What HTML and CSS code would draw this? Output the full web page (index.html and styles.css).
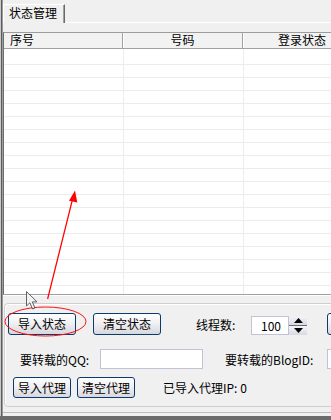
FILE: index.html
```html
<!DOCTYPE html>
<html lang="zh-CN">
<head>
    <meta charset="UTF-8">
    <meta name="viewport" content="width=device-width, initial-scale=1.0">
    <title>状态管理</title>
    <link rel="stylesheet" href="styles.css">
</head>
<body>
    <div class="window">
        <div class="tabstrip">
            <div class="tab">状态管理</div>
        </div>
        <div class="page">
            <div class="list">
                <div class="list-head">
                    <div class="col col-id">序号</div>
                    <div class="col col-num">号码</div>
                    <div class="col col-state">登录状态</div>
                </div>
                <div class="list-body">
                    <div class="cell"></div>
                    <div class="cell"></div>
                    <div class="cell"></div>
                </div>
            </div>

            <div class="group">
                <div class="row row-top">
                    <button class="btn btn-state">导入状态</button>
                    <button class="btn btn-state btn-clear">清空状态</button>
                    <span class="label label-threads">线程数:</span>
                    <div class="spin">
                        <input class="spin-input" type="text" value="100">
                        <div class="spin-btns">
                            <span class="spin-up">
                                <svg width="9" height="5" viewBox="0 0 9 5"><path d="M4.5 0 L9 5 L0 5 Z" fill="#000"/></svg>
                            </span>
                            <span class="spin-down">
                                <svg width="9" height="5" viewBox="0 0 9 5"><path d="M0 0 L9 0 L4.5 5 Z" fill="#000"/></svg>
                            </span>
                        </div>
                    </div>
                    <button class="btn btn-cut"></button>
                </div>

                <div class="row row-fields">
                    <span class="label label-qq">要转载的QQ:</span>
                    <input class="field field-qq" type="text">
                    <span class="label label-blog">要转载的BlogID:</span>
                    <input class="field field-blog" type="text">
                </div>

                <div class="row row-proxy">
                    <button class="btn btn-proxy">导入代理</button>
                    <button class="btn btn-proxy btn-clear-proxy">清空代理</button>
                    <span class="label label-count">已导入代理IP: 0</span>
                </div>
            </div>
        </div>

        <!-- annotations drawn over the screenshot -->
        <svg class="marks" width="331" height="420" viewBox="0 0 331 420">
            <ellipse cx="45.5" cy="321.5" rx="40.5" ry="14.5" fill="none" stroke="#ff1010" stroke-width="1"/>
            <line x1="47.6" y1="299" x2="72.6" y2="199" stroke="#ff0000" stroke-width="1.2"/>
            <path d="M75 190.5 L77.3 202.5 L69 200.8 Z" fill="#ff0000"/>
            <path d="M26.5 291.5 L26.5 306 L29.8 302.8 L32.6 309 L35 308 L32.3 301.9 L37 301.9 Z" fill="#f4f4f4" stroke="#4a4a4a" stroke-width="1" stroke-linejoin="round" opacity="0.85"/>
        </svg>
    </div>
</body>
</html>
```

FILE: styles.css
```css
html, body {
    margin: 0;
    padding: 0;
    overflow: hidden;
}
body {
    font-family: "Noto Sans CJK SC", "Liberation Sans", sans-serif;
    font-size: 12px;
    color: #000000;
    background-color: #f0f0f0;
}
.window {
    position: relative;
    width: 331px;
    height: 420px;
    box-sizing: border-box;
    padding-left: 3px;
    border-bottom: 4px solid #6b6b6b;
    background-color: #f0f0f0;
    box-shadow: inset 1px 0 #c9c9c9, inset 2px 0 #5c5c5c, inset 3px 0 #9c9c9c;
    overflow: hidden;
}
.tabstrip {
    height: 23px;
    box-sizing: border-box;
    padding-top: 4px;
    display: flex;
    border-bottom: 1px solid #ffffff;
}
.tab {
    width: 62px;
    height: 19px;
    box-sizing: border-box;
    padding-left: 5px;
    line-height: 16px;
    border-top: 1px solid #ffffff;
    border-left: 1px solid #ffffff;
    border-right: 1px solid #696969;
    box-shadow: inset -1px 0 #a0a0a0;
    background-color: #f0f0f0;
    margin-bottom: -1px;
}
.page {
    padding-top: 9px;
    padding-bottom: 6px;
    border-bottom: 1px solid #bdbdbd;
    margin-bottom: 2px;
    height: 390px;
    box-sizing: border-box;
}
.list {
    width: 340px;
    height: 263px;
    box-sizing: border-box;
    border-top: 1px solid #9c9c9c;
    border-left: 1px solid #6e6e6e;
    border-bottom: 1px solid #a0a0a0;
    box-shadow: 0 1px #ffffff;
    background-color: #ffffff;
    display: flex;
    flex-direction: column;
    overflow: hidden;
}
.list-head {
    height: 15px;
    flex-shrink: 0;
    display: flex;
    background-color: #f2f2f2;
    border-bottom: 1px solid #a0a0a0;
    line-height: 14px;
}
.col {
    flex-shrink: 0;
    box-sizing: border-box;
    border-right: 1px solid #a0a0a0;
    box-shadow: 1px 0 #ffffff;
}
.col-id {
    width: 119px;
    padding-left: 6px;
}
.col-num {
    width: 120px;
    text-align: center;
}
.col-state {
    width: 119px;
    text-align: center;
}
.list-body {
    flex-grow: 1;
    display: flex;
    background-image: repeating-linear-gradient(to bottom, transparent 0, transparent 12px, #ececec 12px, #ececec 13px);
    background-position: 0 3px;
}
.cell {
    flex-shrink: 0;
    width: 120px;
    box-sizing: border-box;
    border-right: 1px solid #ececec;
}
.group {
    margin-top: 8px;
    margin-left: 1px;
    width: 400px;
    height: 104px;
    box-sizing: border-box;
    border: 1px solid #cfcfcf;
    border-radius: 4px;
    box-shadow: inset 1px 1px #ffffff;
    padding: 9px 0 0 0;
}
.row {
    display: flex;
    align-items: center;
    white-space: nowrap;
}
.row-top {
    height: 22px;
    padding-left: 3px;
}
.btn {
    flex-shrink: 0;
    font-family: inherit;
    font-size: 12px;
    color: #000000;
    padding: 0;
    box-sizing: border-box;
    border: 1px solid #0a3b6c;
    border-radius: 3px;
    background: linear-gradient(#ffffff, #f1f1f3 45%, #d7d7df);
    line-height: 18px;
}
.btn-state {
    width: 68px;
    height: 22px;
}
.btn-clear {
    margin-left: 17px;
}
.label {
    flex-shrink: 0;
}
.label-threads {
    margin-left: 35px;
    width: 55px;
}
.spin {
    flex-shrink: 0;
    display: flex;
    height: 19px;
    margin-top: 3px;
}
.spin-input {
    width: 38px;
    height: 19px;
    box-sizing: border-box;
    border: 1px solid #c2c2d6;
    padding: 0 0 0 9px;
    margin: 0;
    font-family: inherit;
    font-size: 12px;
    background-color: #ffffff;
}
.spin-btns {
    width: 18px;
    display: flex;
    flex-direction: column;
}
.spin-up, .spin-down {
    flex: 1;
    display: flex;
    align-items: center;
    justify-content: center;
    background: linear-gradient(#f4f4f8, #d9d9e3);
}
.spin-up {
    border-bottom: 1px solid #6a6a7a;
}
.btn-cut {
    margin-left: 20px;
    width: 60px;
    height: 22px;
}
.row-fields {
    margin-top: 14px;
    height: 20px;
    padding-left: 15px;
}
.label-qq {
    width: 80px;
}
.field {
    flex-shrink: 0;
    height: 20px;
    box-sizing: border-box;
    border: 1px solid #c2c2d6;
    background-color: #ffffff;
    margin: 0;
    padding: 0;
}
.field-qq {
    width: 103px;
}
.label-blog {
    margin-left: 22px;
    width: 102px;
}
.field-blog {
    width: 80px;
}
.row-proxy {
    margin-top: 8px;
    height: 21px;
    padding-left: 8px;
}
.btn-proxy {
    width: 58px;
    height: 21px;
}
.btn-clear-proxy {
    margin-left: 6px;
}
.label-count {
    margin-left: 28px;
}
.marks {
    position: absolute;
    top: 0;
    left: 0;
    pointer-events: none;
}
```
